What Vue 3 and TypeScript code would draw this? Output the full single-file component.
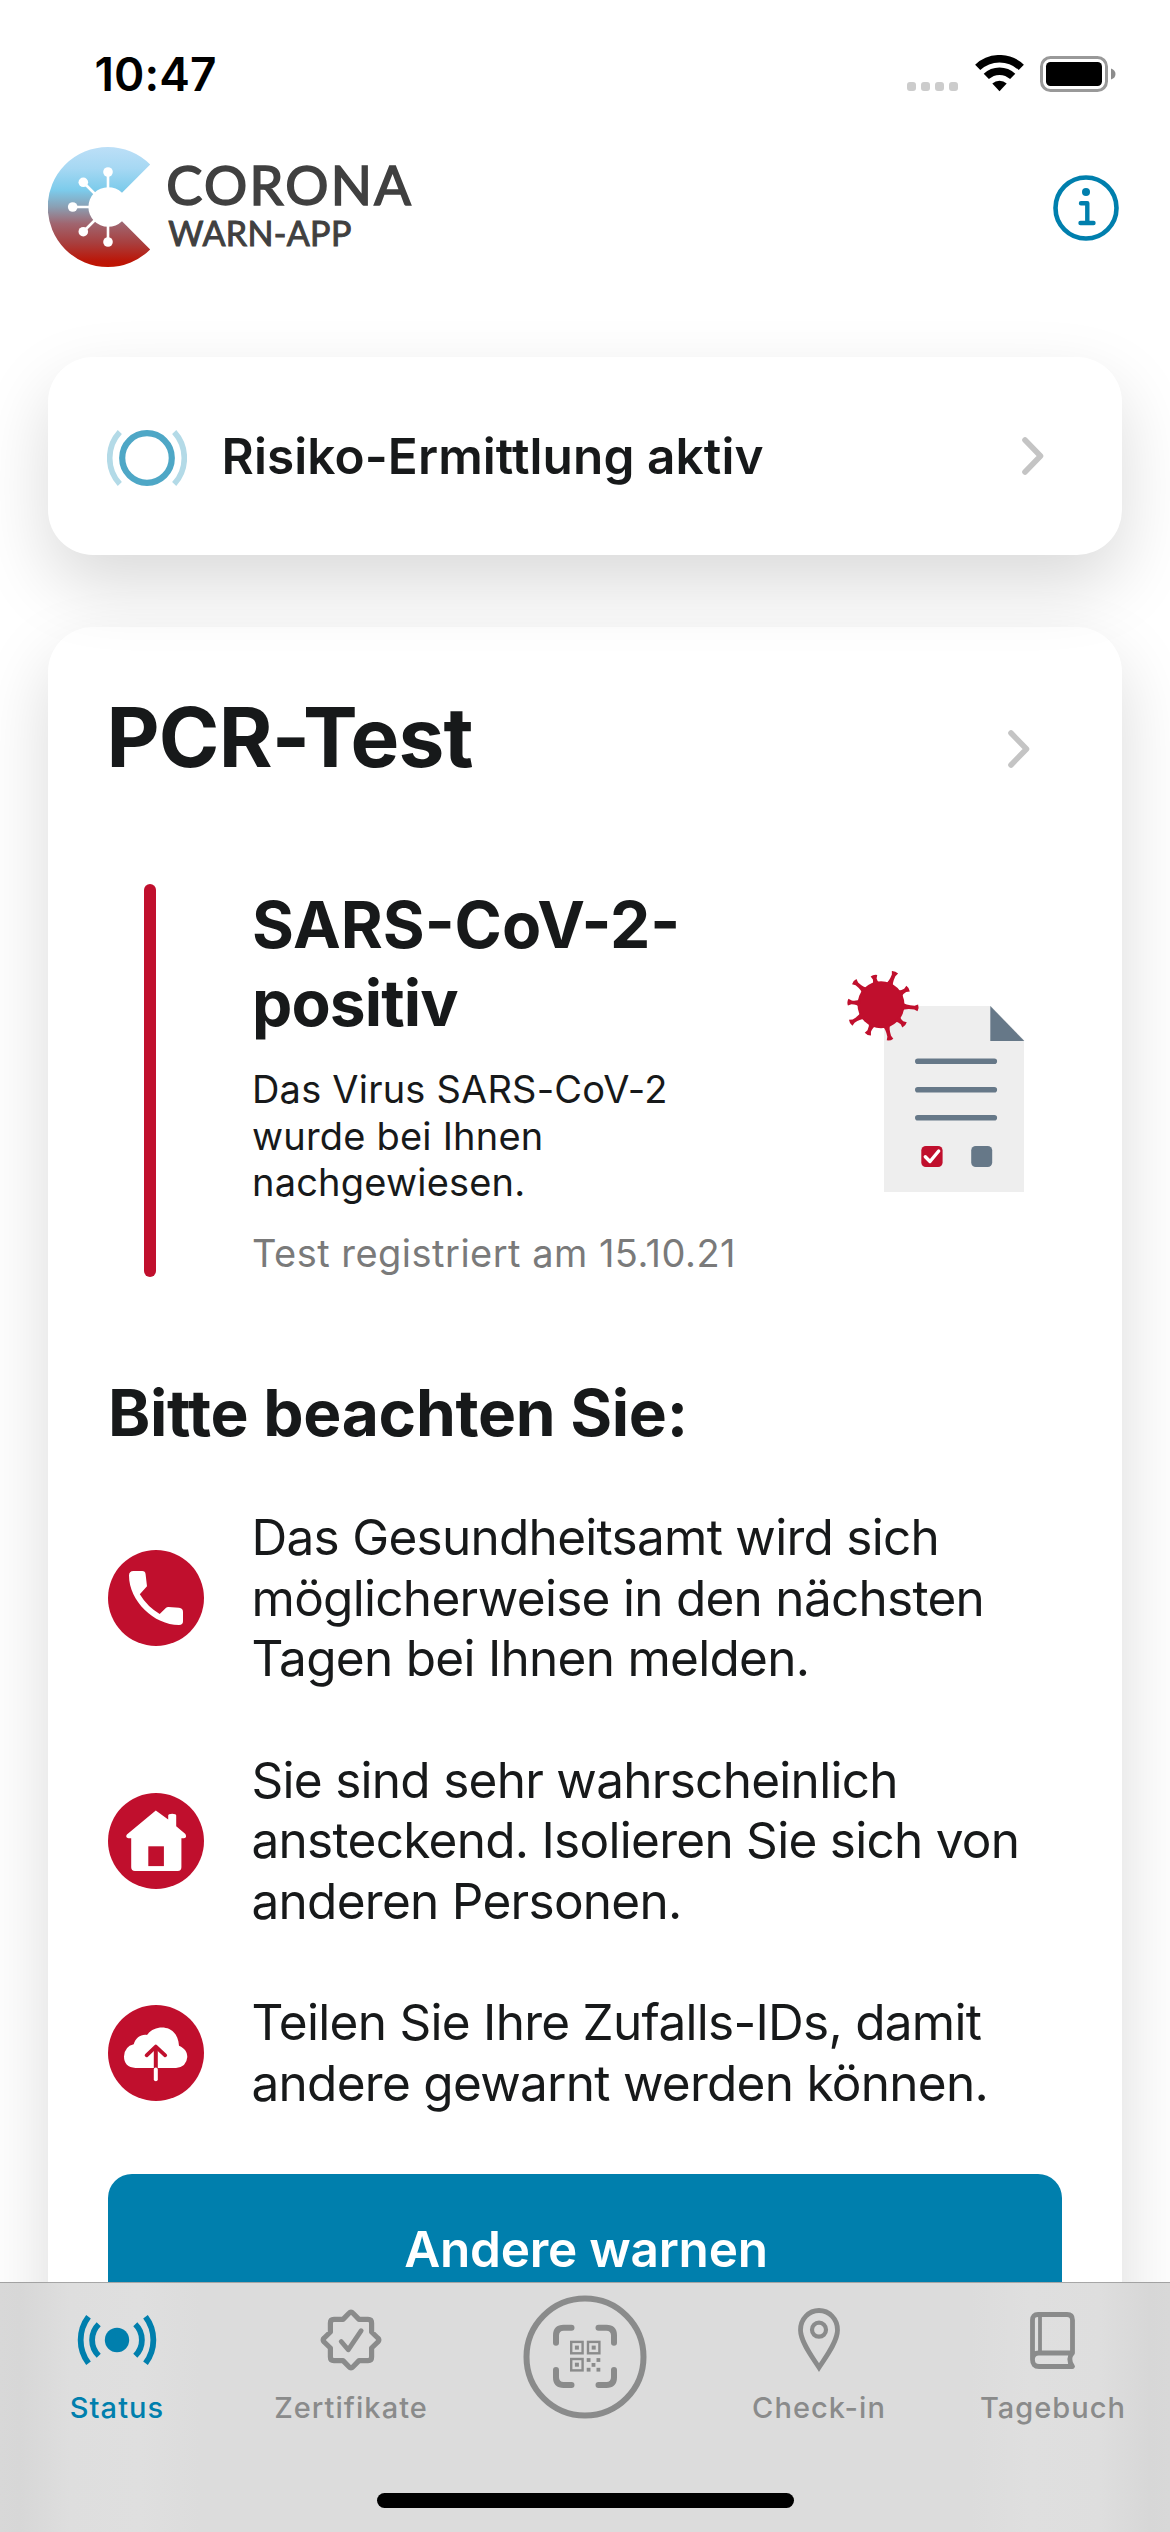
<script setup lang="ts">
type HintIcon = 'phone' | 'home' | 'cloud'
type TabIcon = 'status' | 'certificate' | 'scan' | 'pin' | 'book'

interface Hint {
  icon: HintIcon
  text: string
}

interface Tab {
  icon: TabIcon
  label?: string
  active?: boolean
}

const hints: Hint[] = [
  { icon: 'phone', text: 'Das Gesundheitsamt wird sich\nmöglicherweise in den nächsten\nTagen bei Ihnen melden.' },
  { icon: 'home', text: 'Sie sind sehr wahrscheinlich\nansteckend. Isolieren Sie sich von\nanderen Personen.' },
  { icon: 'cloud', text: 'Teilen Sie Ihre Zufalls-IDs, damit\nandere gewarnt werden können.' },
]

const tabs: Tab[] = [
  { icon: 'status', label: 'Status', active: true },
  { icon: 'certificate', label: 'Zertifikate' },
  { icon: 'scan' },
  { icon: 'pin', label: 'Check-in' },
  { icon: 'book', label: 'Tagebuch' },
]

// Tips of the virus spikes, relative to the centre of its body
const spikeTips: [number, number][] = [
  [14.2, -33], [27.6, -16.4], [37.4, 3.2], [24, 20.6], [9.2, 35.4],
  [-13.4, 30], [-30.8, 18.4], [-33.4, -2.6], [-27.2, -23.4], [-7.2, -29.6],
]

const spikes = spikeTips.map(([x, y]) => {
  const l = Math.hypot(x, y)
  return {
    angle: (Math.atan2(y, x) * 180) / Math.PI,
    d: `M21 -4.2Q24 -1.6 ${l - 4} -1.9L${l - 0.6} -3.4Q${l + 1} 0 ${l - 0.6} 3.4L${l - 4} 1.9Q24 1.6 21 4.2Z`,
  }
})

const finders: [number, number][] = [[-15, -16.3], [1.8, -16.3], [-15, 0.8]]
const modules: [number, number][] = [[3.6, 3], [13.4, 3], [8.5, 7.9], [3.6, 12.7], [13.4, 12.7]]
</script>

<template>
  <div class="screen">
    <div class="status-bar">
      <span class="time">10:47</span>
      <div class="indicators">
        <div class="dots"><i v-for="n in 4" :key="n" /></div>
        <svg class="wifi" width="49" height="37" viewBox="0 0 49 37">
          <g fill="none" stroke="#000" stroke-width="7.5">
            <path d="M2.7 12.4A31.7 31.7 0 0 1 46.3 12.4" />
            <path d="M11.3 21.4A19.2 19.2 0 0 1 37.7 21.4" />
          </g>
          <path d="M24.5 36.3L17.3 28.6A10.5 10.5 0 0 1 31.7 28.6Z" />
        </svg>
        <svg class="battery" width="76" height="36" viewBox="0 0 76 36">
          <rect x="1.5" y="1.5" width="65" height="33" rx="9" fill="none" stroke="#999" stroke-width="3" />
          <rect x="6" y="6" width="56" height="24" rx="4.5" />
          <path d="M71 12.5Q75.5 14 75.5 18T71 23.5Z" fill="#8c8c8c" />
        </svg>
      </div>
    </div>

    <header class="header">
      <svg class="logo" width="364" height="120" viewBox="0 0 364 120">
        <defs>
          <linearGradient id="logo-fill" x1="0" y1="0" x2="0" y2="1">
            <stop offset="0" stop-color="#bcdff7" />
            <stop offset="0.18" stop-color="#a6d8f3" />
            <stop offset="0.36" stop-color="#7ccbeb" />
            <stop offset="0.5" stop-color="#8a9fb3" />
            <stop offset="0.64" stop-color="#a0656f" />
            <stop offset="0.8" stop-color="#a83f3e" />
            <stop offset="0.95" stop-color="#bb1608" />
            <stop offset="1" stop-color="#c01400" />
          </linearGradient>
        </defs>
        <path d="M102.2 17.6A60 60 0 1 0 102.2 102.4L74 74.2A19.8 19.8 0 1 1 74 45.8Z" fill="url(#logo-fill)" />
        <g stroke="#fff" stroke-width="2.6">
          <path d="M60 60V25M60 60L35.5 35.5M60 60H24.5M60 60L35.5 84.5M60 60V95" />
        </g>
        <g fill="#fff">
          <circle cx="60" cy="25" r="4.8" />
          <circle cx="35.3" cy="35.3" r="4.8" />
          <circle cx="24.7" cy="60" r="4.8" />
          <circle cx="35.3" cy="84.7" r="4.8" />
          <circle cx="60" cy="95" r="4.8" />
        </g>
        <g class="logo-text">
          <text x="118.3" y="57.5" font-size="54" textLength="244.5" stroke-width="1.7">CORONA</text>
          <text x="120.3" y="98.5" font-size="34" textLength="183" stroke-width="1">WARN-APP</text>
        </g>
      </svg>
      <svg class="info" width="66" height="66" viewBox="0 0 66 66" fill="none" stroke="#007fad" stroke-linecap="round" stroke-linejoin="round">
        <circle cx="33" cy="33" r="30.5" stroke-width="4.6" />
        <circle cx="33" cy="17" r="4" fill="#007fad" stroke="none" />
        <path d="M28 28.2H34.3V48M27.5 48H40.5" stroke-width="4.4" />
      </svg>
    </header>

    <main class="content">
      <section class="card risk">
        <svg width="80" height="58" viewBox="-40 -29 80 58" fill="none">
          <circle r="24.8" stroke="#4ea7c6" stroke-width="6.2" />
          <g stroke="#b3dae7" stroke-width="5.6">
            <path d="M-27.2 -26A38.5 38.5 0 0 0 -27.2 26" />
            <path d="M27.2 -26A38.5 38.5 0 0 1 27.2 26" />
          </g>
        </svg>
        <span class="risk-title">Risiko-Ermittlung aktiv</span>
        <svg class="chevron" width="22" height="38" viewBox="0 0 22 38"><path d="M3 3L18.5 19L3 35" /></svg>
      </section>

      <section class="card test">
        <div class="test-head">
          <h1>PCR-Test</h1>
          <svg class="chevron" width="22" height="38" viewBox="0 0 22 38"><path d="M3 3L18.5 19L3 35" /></svg>
        </div>

        <div class="result">
          <div class="bar" />
          <div class="result-text">
            <h2>{{ 'SARS-CoV-2-\npositiv' }}</h2>
            <p>{{ 'Das Virus SARS-CoV-2\nwurde bei Ihnen\nnachgewiesen.' }}</p>
            <p class="registered">Test registriert am 15.10.21</p>
          </div>
          <svg class="document" width="180" height="224" viewBox="0 0 180 224">
            <rect x="37" y="37" width="140" height="186" fill="#eee" />
            <path d="M143 36H178V72Z" fill="#fff" />
            <path d="M143.3 37V72H177.3Z" fill="#667888" />
            <path d="M70.8 92.3H147.3M70.8 120.7H147.3M70.8 148.7H147.3" transform="translate(-3 0)" stroke="#667888" stroke-width="5.6" stroke-linecap="round" class="doc-lines" />
            <rect x="74.3" y="177" width="21.3" height="21" rx="4.5" fill="#c00f2d" />
            <path d="M78.3 187.7L83 192.5L91.7 182" fill="none" stroke="#fff" stroke-width="3.4" stroke-linecap="round" stroke-linejoin="round" />
            <rect x="124.2" y="177" width="21" height="21" rx="4.5" fill="#667888" />
            <g transform="translate(34 35.7)" fill="#c00f2d">
              <circle r="23.5" />
              <path v-for="s in spikes" :key="s.angle" :d="s.d" :transform="`rotate(${s.angle})`" />
            </g>
          </svg>
        </div>

        <h2 class="notice">Bitte beachten Sie:</h2>

        <ul class="hints">
          <li v-for="hint in hints" :key="hint.icon">
            <svg width="96" height="96" viewBox="0 0 96 96">
              <circle cx="48" cy="48" r="48" fill="#c00f2d" />
              <path
                v-if="hint.icon === 'phone'"
                d="M25.5 21H34.2Q37.3 21 37.6 24.2L39 36.3L31.8 44.3Q39.5 57 51.7 63.9L57.8 58Q59 56.9 60.5 57L71 57.8Q75 58.3 75 62V71.2Q75 75 71 75C46 75 21 51 21 25.5Q21 21 25.5 21Z"
                fill="#fff"
              />
              <template v-else-if="hint.icon === 'home'">
                <path
                  d="M47.8 17.6L60.2 26.4V22.4Q60.2 20.8 64.2 20.8T68.2 22.4V33.2L77.4 41Q79.3 44.8 76 45.3H73.4V74.3Q73.4 78 69.7 78H27Q23.2 78 23.2 74.3V45.3H20.5Q17 44.5 18.9 41.5Z"
                  fill="#fff"
                />
                <rect x="40.3" y="53.3" width="15.6" height="19.8" fill="#c00f2d" />
              </template>
              <template v-else>
                <path
                  d="M27.5 63Q16 62 16 51.5Q16.5 41.5 25.7 39.3C27.5 33 33 29 39 30C47 18.5 70 19 71 40.8C77 43.5 79.3 47 79.3 52Q78.5 62 68 63Z"
                  fill="#fff"
                />
                <path d="M38.6 50.3L47.8 41.6L57.2 50.3" fill="none" stroke="#c00f2d" stroke-width="3.8" stroke-linecap="round" stroke-linejoin="round" />
                <path d="M47.8 42V64" stroke="#c00f2d" stroke-width="4" />
                <path d="M47.8 64.5V74.3" stroke="#fff" stroke-width="4" stroke-linecap="round" />
              </template>
            </svg>
            <p>{{ hint.text }}</p>
          </li>
        </ul>

        <button class="warn" type="button">Andere warnen</button>
      </section>
    </main>

    <nav class="tab-bar">
      <div class="tabs">
        <div v-for="tab in tabs" :key="tab.icon" class="tab" :class="{ active: tab.active, scan: tab.icon === 'scan' }">
          <svg v-if="tab.icon === 'status'" width="84" height="64" viewBox="-42 -32 84 64" fill="none" stroke="currentColor" stroke-width="5.8">
            <circle r="12.2" fill="currentColor" stroke="none" />
            <path d="M-28.5 -23.3A38.5 38.5 0 0 0 -28.5 23.3M28.5 -23.3A38.5 38.5 0 0 1 28.5 23.3" />
            <path d="M-18.3 -15.7A22 22 0 0 0 -18.3 15.7M18.3 -15.7A22 22 0 0 1 18.3 15.7" />
          </svg>
          <svg v-else-if="tab.icon === 'certificate'" width="64" height="64" viewBox="-32 -32 64 64" fill="none" stroke="currentColor" stroke-width="5.2" stroke-linecap="round" stroke-linejoin="round">
            <path d="M-2 -26.8Q0 -29 2 -26.8L8 -20.6H17Q20.6 -20.6 20.6 -17V-8L26.8 -2Q29 0 26.8 2L20.6 8V17Q20.6 20.6 17 20.6H8L2 26.8Q0 29 -2 26.8L-8 20.6H-17Q-20.6 20.6 -20.6 17V8L-26.8 2Q-29 0 -26.8 -2L-20.6 -8V-17Q-20.6 -20.6 -17 -20.6H-8Z" />
            <path d="M-9.8 1.5L-2.8 9.8L10.2 -9.3" stroke-width="4.8" />
          </svg>
          <svg v-else-if="tab.icon === 'scan'" width="124" height="124" viewBox="-62 -62 124 124" fill="none" stroke="currentColor">
            <circle r="58.5" stroke-width="6" />
            <g stroke-width="6" stroke-linecap="round">
              <path d="M-29 -14.3V-21.5Q-29 -29.2 -21.3 -29.2H-13.5M13.5 -29.2H21.3Q29 -29.2 29 -21.5V-14.3M29 13V20.3Q29 28 21.3 28H13.5M-13.5 28H-21.3Q-29 28 -29 20.3V13" />
            </g>
            <g v-for="([x, y], i) in finders" :key="`f${i}`">
              <rect :x="x + 1.2" :y="y + 1.2" width="11.4" height="11.4" stroke-width="2.4" />
              <rect :x="x + 4.9" :y="y + 4.9" width="4" height="4" fill="currentColor" stroke="none" />
            </g>
            <rect v-for="([x, y], i) in modules" :key="`m${i}`" :x="x - 1.9" :y="y - 1.9" width="3.8" height="3.8" fill="currentColor" stroke="none" />
          </svg>
          <svg v-else-if="tab.icon === 'pin'" width="42" height="64" viewBox="0 0 42 64" fill="none" stroke="currentColor">
            <path d="M21 59.5C15 50 2.5 34 2.5 22A18.5 19.5 0 0 1 39.5 22C39.5 34 27 50 21 59.5Z" stroke-width="4.8" />
            <circle cx="21" cy="21.7" r="7" stroke-width="4.2" />
          </svg>
          <svg v-else width="46" height="64" viewBox="0 -4 46 64" fill="none" stroke="currentColor" stroke-width="4.8" stroke-linecap="round" stroke-linejoin="round">
            <path d="M42.5 41H8.5Q2.5 41.5 2.5 47V8Q2.5 2.5 8 2.5H37Q42.5 2.5 42.5 8V41Q37 47 42.5 54.5H9Q2.5 54.5 2.5 47.5" />
            <path d="M10 3V40" stroke-width="3.8" stroke-linecap="butt" />
          </svg>
          <span v-if="tab.label">{{ tab.label }}</span>
        </div>
      </div>
      <div class="home-indicator" />
    </nav>
  </div>
</template>

<style>
body {
  background: #fff;
}
</style>

<style scoped>
.screen {
  position: relative;
  box-sizing: border-box;
  width: 1170px;
  height: 2532px;
  overflow: hidden;
  background: #fff;
  color: #17191a;
  font-family: Inter, "Liberation Sans", sans-serif;
}

h1,
h2,
p,
ul {
  margin: 0;
  padding: 0;
}

svg {
  display: block;
  flex: none;
}

.status-bar {
  display: flex;
  justify-content: space-between;
  height: 147px;
  padding: 0 54px 0 94.5px;
}

.time {
  padding-top: 44px;
  color: #000;
  font-size: 46px;
  font-weight: 600;
  line-height: 60px;
  letter-spacing: 0.1px;
}

.indicators {
  display: flex;
  align-items: flex-start;
}

.dots {
  display: flex;
  gap: 5px;
  margin: 82px 17px 0 0;
}

.dots i {
  width: 9px;
  height: 9px;
  border-radius: 3px;
  background: #ccc;
}

.wifi {
  margin: 55px 16px 0 0;
}

.battery {
  margin-top: 56px;
}

.header {
  display: flex;
  justify-content: space-between;
  height: 210px;
  padding: 0 51.5px 0 48px;
}

.logo-text text {
  fill: #404040;
  stroke: #404040;
  font-family: Lato, sans-serif;
}

.info {
  margin-top: 27.5px;
}

.content {
  display: flex;
  flex-direction: column;
  gap: 72px;
  padding: 0 48px;
}

.card {
  box-sizing: border-box;
  border-radius: 45px;
  background: #fff;
  box-shadow: 0 30px 70px rgba(0, 0, 0, 0.15);
}

.chevron {
  margin-left: auto;
  fill: none;
  stroke: #c4c4c4;
  stroke-width: 5.6;
  stroke-linecap: round;
  stroke-linejoin: round;
}

.risk {
  position: relative;
  z-index: 1;
  display: flex;
  align-items: center;
  height: 198px;
  padding: 3px 78px 0 59px;
}

.risk-title {
  margin: -3px 0 0 34.5px;
  font-size: 49.5px;
  font-weight: 600;
  line-height: 60px;
  letter-spacing: 0.1px;
}

.risk .chevron {
  margin-top: -3px;
}

.test {
  height: 2000px;
  padding: 60px 60px 0;
}

.test-head {
  display: flex;
  align-items: flex-start;
  height: 197px;
  padding-right: 32px;
}

h1 {
  margin: 1px 0 0 -1.5px;
  font-size: 82px;
  font-weight: 700;
  line-height: 100px;
  letter-spacing: -0.83px;
}

.test-head .chevron {
  margin-top: 43px;
}

.result {
  display: flex;
  height: 393px;
  padding-left: 36px;
}

.bar {
  width: 12px;
  border-radius: 6px;
  background: #c00f2d;
}

.result-text {
  width: 590px;
  margin-left: 96px;
  padding-top: 2px;
  white-space: pre-line;
}

h2 {
  font-size: 64px;
  font-weight: 700;
  line-height: 78px;
  letter-spacing: -0.3px;
}

.result-text h2::first-line {
  letter-spacing: 0;
}

.result-text h2 {
  letter-spacing: -0.9px;
}

.result-text p {
  margin-top: 24px;
  font-size: 38px;
  line-height: 46.5px;
  letter-spacing: 0.2px;
}

.result-text .registered {
  color: #7a7a7a;
  letter-spacing: 0.48px;
}

.document {
  margin: 85px 0 0 5px;
}

.doc-lines {
  transform: none;
}

.notice {
  margin-top: 97px;
}

.hints {
  display: flex;
  flex-direction: column;
  gap: 60.7px;
  margin-top: 55px;
  list-style: none;
}

.hints li {
  display: flex;
  align-items: center;
}

.hints p {
  margin-left: 47.5px;
  font-size: 49.5px;
  line-height: 60.67px;
  letter-spacing: -0.72px;
  white-space: pre;
}

.warn {
  display: block;
  width: 100%;
  height: 150px;
  margin-top: 60px;
  padding: 0 0 0 2px;
  border: 0;
  border-radius: 24px;
  background: #007fad;
  color: #fff;
  font-family: inherit;
  font-size: 49.5px;
  font-weight: 600;
  letter-spacing: -0.24px;
}

.tab-bar {
  position: absolute;
  right: 0;
  bottom: 0;
  left: 0;
  z-index: 2;
  box-sizing: border-box;
  height: 250px;
  background: linear-gradient(90deg, #d8d8d8, #d7d7d7 20px, #dedede 70px, #dfdfdf 140px, #dcdcdc 200px, #dcdcdc 970px, #dfdfdf 1030px, #dedede 1100px, #d7d7d7 1150px, #d8d8d8);
}

.tab-bar::before {
  content: "";
  position: absolute;
  top: 0;
  right: 0;
  left: 0;
  height: 1px;
  background: rgba(0, 0, 0, 0.25);
}

.tabs {
  display: flex;
  height: 211px;
}

.tab {
  display: flex;
  flex: 1;
  flex-direction: column;
  align-items: center;
  padding-top: 26px;
  color: #8a8b8b;
  font-size: 29px;
  font-weight: 500;
  line-height: 36px;
  letter-spacing: 1.05px;
}

.tab span {
  margin-top: 17.5px;
}

.tab.active {
  color: #007fad;
}

.tab.scan {
  padding-top: 13px;
}

.home-indicator {
  width: 417px;
  height: 15px;
  margin: 0 auto;
  border-radius: 7.5px;
  background: #000;
}
</style>
